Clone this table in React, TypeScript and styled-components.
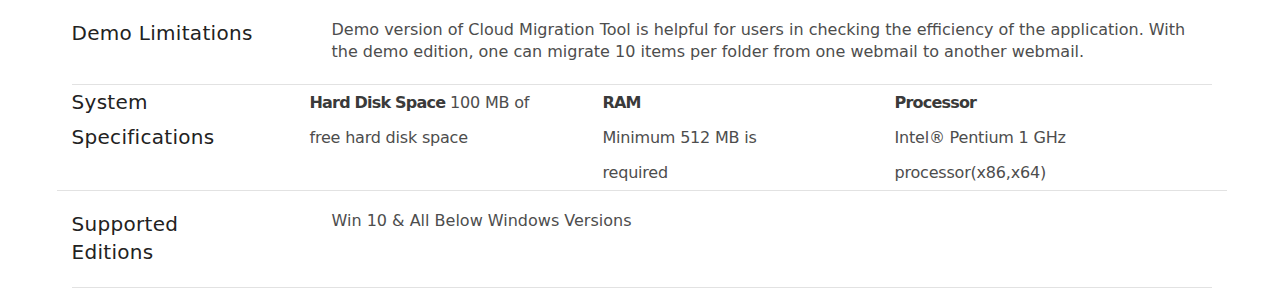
import { createGlobalStyle, styled } from "styled-components";

const GlobalStyle = createGlobalStyle`
  body {
    margin: 0;
    background: #fff;
    font-family: "DejaVu Sans", "Open Sans", sans-serif;
  }
`;

const specs = [
  { label: "Hard Disk Space", lines: ["100 MB of", "free hard disk space"], inline: true },
  { label: "RAM", lines: ["Minimum 512 MB is", "required"], inline: false },
  { label: "Processor", lines: ["Intel® Pentium 1 GHz", "processor(x86,x64)"], inline: false },
];

const App = () => {
  return (
    <>
      <GlobalStyle />
      <Container>
        <InfoRow>
          <Heading>Demo Limitations</Heading>
          <Body>
            Demo version of Cloud Migration Tool is helpful for users in checking the efficiency
            of the application. With the demo edition, one can migrate 10 items per folder from
            one webmail to another webmail.
          </Body>
        </InfoRow>
        <SpecRow>
          <SpecHeading>
            System
            <br />
            Specifications
          </SpecHeading>
          {specs.map((s) =>
            s.inline ? (
              <SpecCell key={s.label}>
                <SpecLabel>{s.label}</SpecLabel> {s.lines[0]}
                <br />
                {s.lines[1]}
              </SpecCell>
            ) : (
              <SpecCell key={s.label}>
                <SpecLabel>{s.label}</SpecLabel>
                <br />
                {s.lines[0]}
                <br />
                {s.lines[1]}
              </SpecCell>
            )
          )}
        </SpecRow>
        <InfoRow>
          <Heading>
            Supported
            <br />
            Editions
          </Heading>
          <Body>Win 10 &amp; All Below Windows Versions</Body>
        </InfoRow>
      </Container>
    </>
  );
};

export default App;

const Container = styled.div`
  width: 1140px;
  margin: 0 auto;
`;

const InfoRow = styled.div`
  display: grid;
  grid-template-columns: 260px 1fr;
  padding: 19px 0 21px;
  border-bottom: 1px solid #e2e2e2;
`;

const Heading = styled.h3`
  margin: 0;
  font-size: 20px;
  font-weight: 400;
  line-height: 28px;
  color: #222;
  letter-spacing: 0.3px;
`;

const Body = styled.p`
  margin: 0;
  padding-right: 20px;
  font-size: 16px;
  line-height: 22px;
  color: #4d4d4d;
  letter-spacing: 0;
`;

const SpecRow = styled.div`
  display: grid;
  grid-template-columns: 238px 293px 292px 1fr;
  margin: 0 -15px;
  padding-left: 15px;
  border-bottom: 1px solid #e2e2e2;
`;

const SpecHeading = styled(Heading)`
  line-height: 35px;
`;

const SpecCell = styled.div`
  font-size: 16px;
  line-height: 35px;
  color: #4d4d4d;
  letter-spacing: -0.2px;
  white-space: nowrap;
`;

const SpecLabel = styled.span`
  font-weight: 600;
  color: #3a3a3a;
  letter-spacing: -0.8px;
`;
